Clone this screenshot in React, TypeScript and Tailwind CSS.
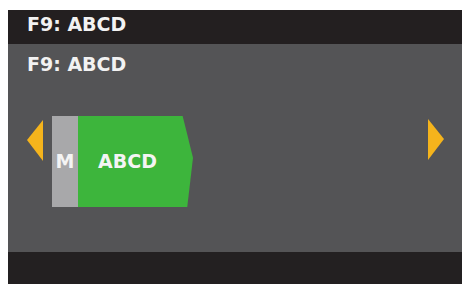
import React from "react";

const font = { fontFamily: '"DejaVu Sans", "Liberation Sans", sans-serif' };

function Arrow({ dir }: { dir: "left" | "right" }) {
  return (
    <svg width="16" height="41" viewBox="0 0 16 41" className="shrink-0">
      {dir === "left" ? (
        <polygon points="16,0 0,20 16,41" fill="#f5b41c" />
      ) : (
        <polygon points="0,0 16,20 0,41" fill="#f5b41c" />
      )}
    </svg>
  );
}

export default function App() {
  return (
    <div className="w-[465px] h-[287px] bg-white pl-[8px] pt-[10px]" style={font}>
      <div className="w-[454px] h-[274px] flex flex-col">
        <div className="h-[34px] bg-[#231f20] pl-[19px] pt-[3px] text-[19px] leading-[22px] font-bold text-[#f2f2f2]">
          F9: ABCD
        </div>
        <div className="flex-1 bg-[#545456] flex flex-col pl-[19px] pr-[18px]">
          <div className="mt-[9px] text-[19px] leading-[22px] font-bold text-[#f2f2f2]">F9: ABCD</div>
          <div className="mt-[41px] flex items-start justify-between">
            <div className="flex items-start">
              <div className="mt-[4px]">
                <Arrow dir="left" />
              </div>
              <div className="ml-[9px] flex h-[91px]">
                <div className="w-[26px] bg-[#a8a8aa] flex items-center justify-center text-[19px] font-bold text-[#f4f4f4]">
                  M
                </div>
                <div className="w-[115px] bg-[#3db53c] flex items-center pl-[20px] text-[19px] font-bold text-[#f4f4f4] [clip-path:polygon(0_0,91%_0,100%_46%,95%_100%,0_100%)]">
                  ABCD
                </div>
              </div>
            </div>
            <div className="mt-[3px]">
              <Arrow dir="right" />
            </div>
          </div>
        </div>
        <div className="h-[32px] bg-[#232021]" />
      </div>
    </div>
  );
}
